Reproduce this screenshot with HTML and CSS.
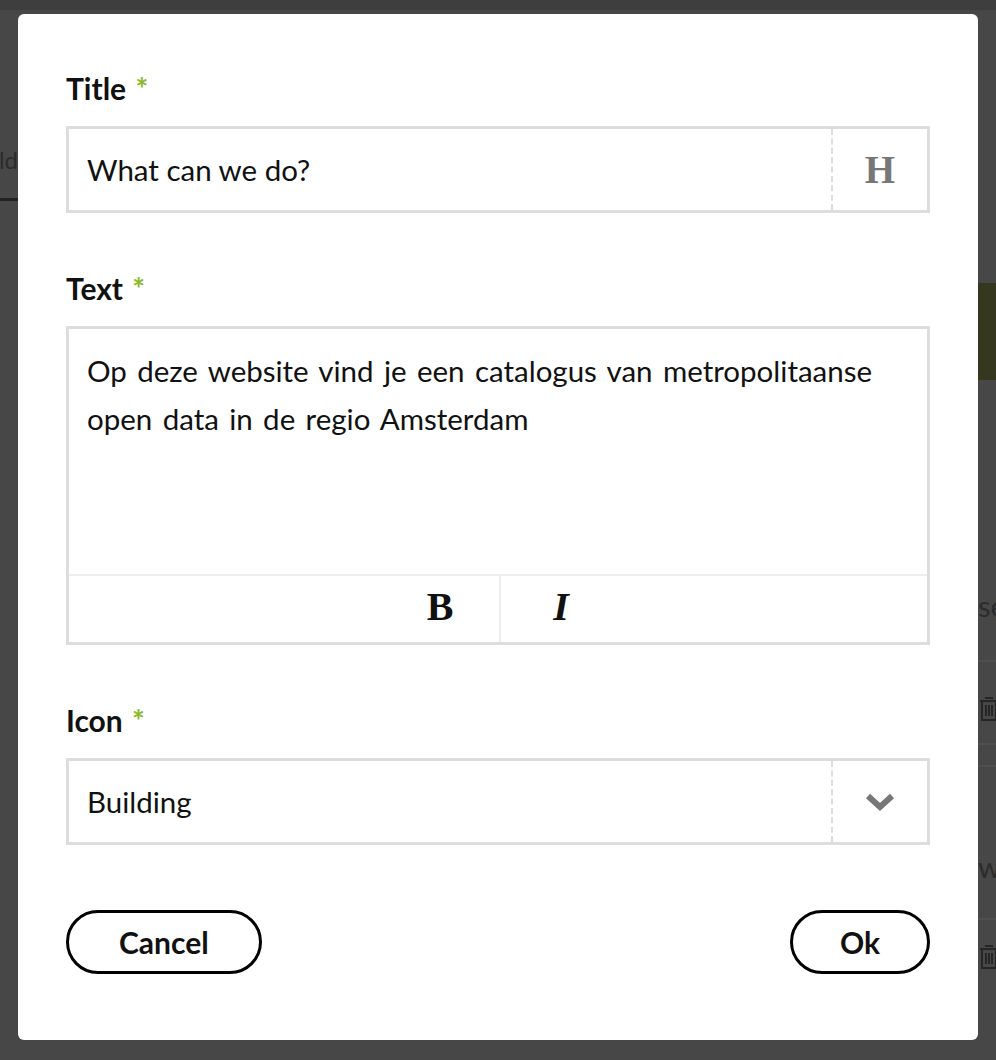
FILE: index.html
```html
<!DOCTYPE html>
<html lang="nl">
<head>
<meta charset="utf-8">
<title>Edit item</title>
<link rel="stylesheet" href="styles.css">
</head>
<body>
<div class="page">
  <div class="page-top"></div>
  <div class="page-body">
    <div class="page-left">
      <div class="tab">Build</div>
    </div>
    <div class="page-right">
      <div class="green"></div>
      <div class="row-text row-se">se</div>
      <div class="rule rule-a"></div>
      <svg class="trash trash-a" width="22" height="28" viewBox="0 0 22 28"><path d="M7 3h8M2 6h18M4 6v19h14V6M8 10v11M11 10v11M14 10v11" fill="none" stroke="#262626" stroke-width="2"/></svg>
      <div class="rule rule-b"></div>
      <div class="rule rule-c"></div>
      <div class="row-text row-w">w</div>
      <div class="rule rule-d"></div>
      <svg class="trash trash-b" width="22" height="28" viewBox="0 0 22 28"><path d="M7 3h8M2 6h18M4 6v19h14V6M8 10v11M11 10v11M14 10v11" fill="none" stroke="#262626" stroke-width="2"/></svg>
    </div>
  </div>
</div>

<div class="modal">
  <div class="field">
    <div class="label">Title <span class="req">*</span></div>
    <div class="input">
      <div class="input-text">What can we do?</div>
      <div class="addon"><span class="h-glyph">H</span></div>
    </div>
  </div>

  <div class="field">
    <div class="label">Text <span class="req">*</span></div>
    <div class="textarea">
      <div class="ta-body">Op deze website vind je een catalogus van metropolitaanse open data in de regio Amsterdam</div>
      <div class="toolbar">
        <button class="tool tool-b">B</button>
        <button class="tool tool-i">I</button>
      </div>
    </div>
  </div>

  <div class="field">
    <div class="label">Icon <span class="req">*</span></div>
    <div class="input">
      <div class="input-text">Building</div>
      <div class="addon">
        <svg width="30" height="20" viewBox="0 0 30 20"><path d="M3 4l12 11L27 4" fill="none" stroke="#777" stroke-width="6"/></svg>
      </div>
    </div>
  </div>

  <div class="actions">
    <button class="btn btn-cancel">Cancel</button>
    <button class="btn btn-ok">Ok</button>
  </div>
</div>
</body>
</html>
```

FILE: styles.css
```css
* { box-sizing: border-box; }

body {
  margin: 0;
  height: 1060px;
  overflow: hidden;
  background: #474747;
  font-family: "Lato", "Open Sans", sans-serif;
  color: #111;
}

/* background page under the overlay */
.page {
  height: 1060px;
  display: flex;
  flex-direction: column;
}
.page-top {
  height: 10px;
  background: #3e3e3e;
}
.page-body {
  flex: 1;
  display: flex;
  justify-content: space-between;
}
.page-left {
  width: 18px;
  overflow: hidden;
}
.tab {
  margin-top: 134px;
  display: flex;
  justify-content: flex-end;
  line-height: 32px;
  padding-bottom: 22px;
  border-bottom: 3px solid #222;
  font-size: 24px;
  color: #2c2c2c;
  white-space: nowrap;
}
.page-right {
  width: 18px;
  overflow: hidden;
  display: flex;
  flex-direction: column;
}
.green {
  margin-top: 273px;
  height: 97px;
  background: #35381f;
}
.row-text {
  font-size: 29px;
  line-height: 32px;
  color: #2c2c2c;
  white-space: nowrap;
}
.row-se { margin-top: 210px; }
.row-w { margin-top: 84px; }
.rule {
  height: 2px;
  background: #4f4f4f;
  width: 18px;
}
.rule-a { margin-top: 38px; }
.trash { flex: none; }
.trash-a { margin-top: 33px; }
.rule-b { margin-top: 20px; }
.rule-c { margin-top: 20px; }
.rule-d { margin-top: 35px; }
.trash-b { margin-top: 23px; }

/* modal */
.modal {
  position: fixed;
  top: 14px;
  left: 18px;
  width: 960px;
  height: 1026px;
  background: #fff;
  border-radius: 6px;
  padding: 58px 48px 0;
}

.field + .field { margin-top: 59px; }

.label {
  font-size: 30px;
  font-weight: 700;
  line-height: 32px;
  margin-bottom: 22px;
}
.req {
  color: #8cb82b;
  margin-left: 2px;
}

.input {
  height: 87px;
  border: 3px solid #ddd;
  display: flex;
}
.input-text {
  flex: 1;
  display: flex;
  align-items: center;
  padding-left: 18px;
  font-size: 29.5px;
}
.addon {
  width: 96px;
  border-left: 2px dashed #ddd;
  display: flex;
  align-items: center;
  justify-content: center;
}
.h-glyph {
  font-family: "Liberation Serif", serif;
  font-weight: 700;
  font-size: 39px;
  color: #777;
  line-height: 1;
}

.textarea {
  height: 319px;
  border: 3px solid #ddd;
  display: flex;
  flex-direction: column;
}
.ta-body {
  flex: 1;
  padding: 18px 18px 0;
  font-size: 29.5px;
  line-height: 48px;
  word-spacing: 2.8px;
}
.toolbar {
  height: 68px;
  border-top: 2px solid #eee;
  display: flex;
  justify-content: center;
  padding-left: 6px;
}
.tool {
  width: 120px;
  border: 0;
  background: transparent;
  font-family: "Liberation Serif", serif;
  font-weight: 700;
  font-size: 40px;
  color: #111;
  padding: 0 0 6px;
}
.tool-b { border-right: 2px solid #eee; }
.tool-i { font-style: italic; }

.actions {
  margin-top: 65px;
  display: flex;
  justify-content: space-between;
}
.btn {
  height: 64px;
  border: 3px solid #000;
  border-radius: 32px;
  background: #fff;
  font-family: "Lato", sans-serif;
  font-size: 30px;
  font-weight: 700;
  color: #111;
}
.btn-cancel { padding: 0 50px; }
.btn-ok { padding: 0 47px; }
```
